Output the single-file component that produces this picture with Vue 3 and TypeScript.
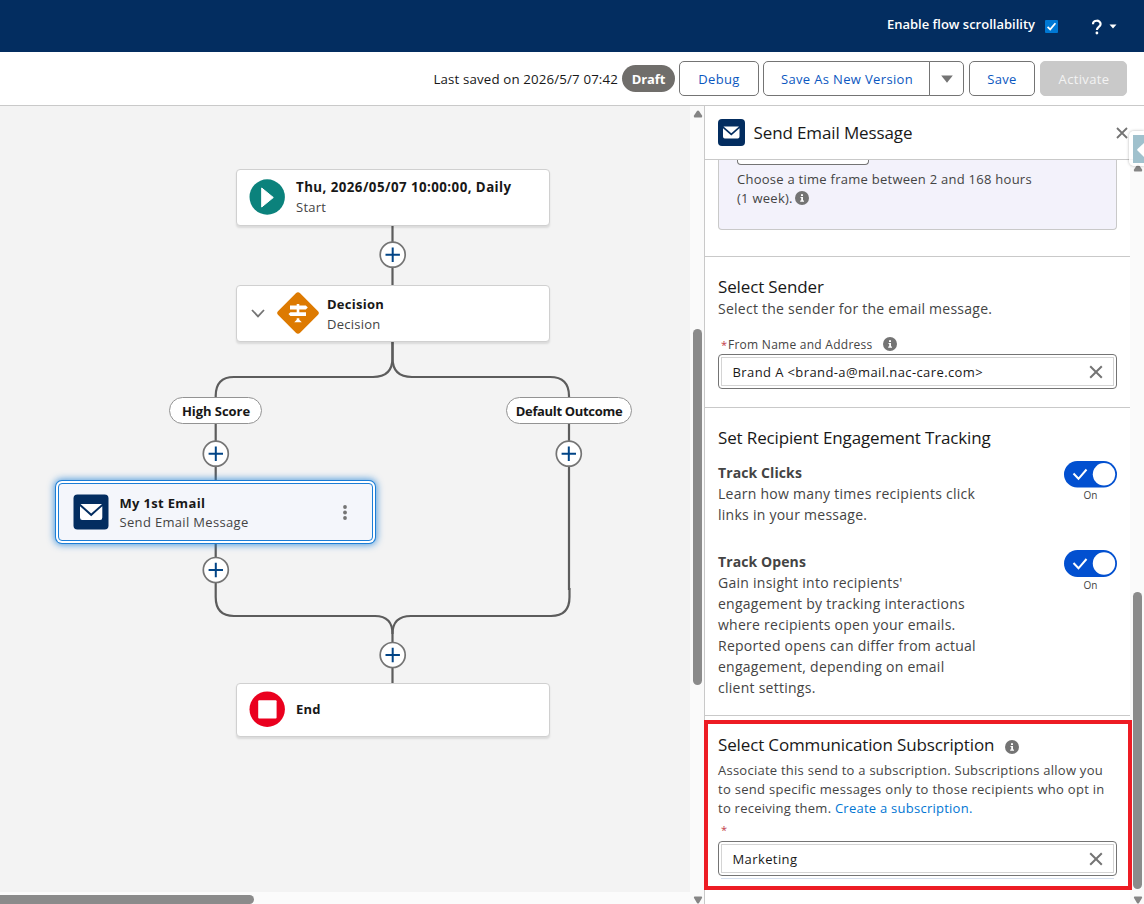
<script setup lang="ts">
interface Point {
  x: number
  y: number
}

const addButtons: Point[] = [
  { x: 392.7, y: 254.7 },
  { x: 215.8, y: 453.7 },
  { x: 568.8, y: 453.7 },
  { x: 215.8, y: 570 },
  { x: 392.7, y: 655 },
]

const connectors: string[] = [
  'M392.5 226V285',
  'M392.5 342V358Q392.5 377 373 377H234Q215.700 377 215.700 396V483',
  'M392.500 342V358Q392.500 377 412 377H550Q569 377 569 396V590',
  'M215.700 543V597Q215.700 616 234 616H375Q392.500 616 392.500 634V683',
  'M569.500 588V597Q569.500 616 551 616H411Q392.500 616 392.500 634',
]

const clicksText: string[] = ['Learn how many times recipients click', 'links in your message.']
const opensText: string[] = [
  "Gain insight into recipients'",
  'engagement by tracking interactions',
  'where recipients open your emails.',
  'Reported opens can differ from actual',
  'engagement, depending on email',
  'client settings.',
]
</script>

<template>
  <div class="app">
    <header class="topbar">
      <span class="scroll-label">Enable flow scrollability</span>
      <svg class="checkbox" width="13" height="13" viewBox="0 0 13 13">
        <rect width="13" height="13" rx="1" fill="#0078d4" />
        <path d="M2.600 6.800L5.200 9.400L10.400 3.200" fill="none" stroke="#fff" stroke-width="1.700" />
      </svg>
      <svg class="help" width="12" height="16" viewBox="0 0 12 16">
        <path d="M2 5.200C2 .6 9.600 .6 9.600 5C9.600 8 5.900 7.800 5.900 11" fill="none" stroke="#fff" stroke-width="2.200" />
        <circle cx="5.900" cy="14" r="1.400" fill="#fff" />
      </svg>
      <svg class="help-caret" width="8" height="5" viewBox="0 0 8 5"><path d="M.5 .5H7.500L4 4.500Z" fill="#fff" /></svg>
    </header>

    <div class="toolbar">
      <span class="saved">Last saved on 2026/5/7 07:42</span>
      <span class="draft">Draft</span>
      <button class="btn debug"><span>Debug</span></button>
      <div class="group">
        <button class="btn save-as"><span>Save As New Version</span></button>
        <button class="btn more">
          <svg width="12" height="8" viewBox="0 0 12 8"><path d="M.2 .5H11.800L6 7.800Z" fill="#747474" /></svg>
        </button>
      </div>
      <button class="btn save"><span>Save</span></button>
      <button class="btn activate"><span>Activate</span></button>
    </div>

    <main class="main">
      <section class="canvas">
        <svg class="lines" width="690" height="904" viewBox="0 0 690 904">
          <path v-for="d in connectors" :key="d" :d="d" fill="none" stroke="#5c5c5c" stroke-width="2.200" />
        </svg>

        <div class="node start">
          <svg width="36" height="36" viewBox="0 0 36 36">
            <circle cx="18.200" cy="18" r="17.700" fill="#0b827c" />
            <path d="M12.700 9L24.300 18.500L12.700 28Z" fill="#fff" stroke="#fff" stroke-linejoin="round" />
          </svg>
          <div class="node-text">
            <strong class="start-title">Thu, 2026/05/07 10:00:00, Daily</strong>
            <span>Start</span>
          </div>
        </div>

        <div class="node decision">
          <svg class="chev" width="14" height="9" viewBox="0 0 14 9">
            <path d="M1 1L7 7.400L13 1" fill="none" stroke="#747474" stroke-width="1.800" />
          </svg>
          <svg class="diamond" width="42" height="42" viewBox="0 0 42 42">
            <rect x="5.500" y="5.500" width="31" height="31" rx="3" transform="rotate(45 21 21)" fill="#dd7a01" />
            <path
              d="M13 13.500H19.700V12H22.300V13.500H28.800L30.800 15.500L28.800 17.500H13ZM19.700 17H22.300V20.200H19.700ZM13.400 20.200H29V24H13.400L11.500 22.100ZM19.700 26.300H22.300V27.800L24.800 30.200H17.200L19.700 27.800Z"
              fill="#fff"
            />
          </svg>
          <div class="node-text">
            <strong class="decision-title">Decision</strong>
            <span class="decision-sub">Decision</span>
          </div>
        </div>

        <div class="outcome high"><span>High Score</span></div>
        <div class="outcome default"><span>Default Outcome</span></div>

        <div class="node email">
          <svg width="36" height="36" viewBox="0 0 36 36">
            <rect width="35" height="35" x=".5" y=".5" rx="4" fill="#032d60" />
            <path d="M7.500 10H29L18.200 19.500Z" fill="#fff" />
            <path d="M7 12.200L18.200 22.200L29.300 12.200V23.500Q29.300 26 27 26H9.300Q7 26 7 23.500Z" fill="#fff" />
          </svg>
          <div class="node-text">
            <strong class="email-title">My 1st Email</strong>
            <span class="email-sub">Send Email Message</span>
          </div>
          <svg class="dots" width="4" height="15" viewBox="0 0 4 15">
            <circle cx="2" cy="2" r="1.900" fill="#747474" />
            <circle cx="2" cy="7.500" r="1.900" fill="#747474" />
            <circle cx="2" cy="13" r="1.900" fill="#747474" />
          </svg>
        </div>

        <div class="node end">
          <svg width="36" height="36" viewBox="0 0 36 36">
            <circle cx="18.200" cy="18.200" r="17.700" fill="#ea001e" />
            <rect x="9.200" y="9.200" width="18.400" height="18.400" rx="1" fill="#fff" />
          </svg>
          <div class="node-text"><strong class="end-title">End</strong></div>
        </div>

        <svg class="lines" width="690" height="904" viewBox="0 0 690 904">
          <g v-for="p in addButtons" :key="`${p.x}-${p.y}`" :transform="`translate(${p.x} ${p.y})`">
            <circle r="12.500" fill="#fff" stroke="#747474" stroke-width="1.700" />
            <path d="M-7.200 0H7.200M0 -7.200V7.200" stroke="#014486" stroke-width="2" />
          </g>
        </svg>

        <div class="hscroll"></div>
      </section>

      <div class="vscroll">
        <svg class="arrow" width="10" height="8" viewBox="0 0 10 8"><path d="M4 1Q5 0 6 1L9 5.500Q9.500 7.500 8.500 7.500H1.500Q.5 7.500 1 5.500Z" fill="#858585" /></svg>
        <div class="thumb"></div>
        <svg class="arrow down" width="10" height="8" viewBox="0 0 10 8"><path d="M4 7Q5 8 6 7L9 2Q9.500 .5 8.500 .5H1.500Q.5 .5 1 2Z" fill="#858585" /></svg>
      </div>

      <aside class="panel">
        <div class="panel-head">
          <svg width="27" height="27" viewBox="0 0 27 27">
            <rect width="27" height="27" rx="4" fill="#032d60" />
            <path d="M5.500 7.500H21L13.300 14.300Z" fill="#fff" />
            <path d="M5 9.200L13.300 16.500L21.500 9.200V17.500Q21.500 19.500 19.700 19.500H6.800Q5 19.500 5 17.500Z" fill="#fff" />
          </svg>
          <h2 class="panel-title">Send Email Message</h2>
          <svg class="close" width="12" height="12" viewBox="0 0 12 12"><path d="M1 1L11 11M11 1L1 11" stroke="#747474" stroke-width="1.800" /></svg>
        </div>

        <div class="panel-row">
          <div class="panel-body">
            <div class="frame-box">
              <div class="cut-input"></div>
              <p class="frame-text">
                <span class="f1">Choose a time frame between 2 and 168 hours</span>
                <span class="frame-last">
                  <span class="f2">(1 week).</span>
                  <svg class="info" width="14" height="14" viewBox="0 0 14 14"><circle cx="7" cy="7" r="7" fill="#747474" /><path d="M6 3.200H8V5H6ZM5.500 6H8V9.600H9V10.800H5.200V9.600H6.200V7.100H5.500Z" fill="#fff" /></svg>
                </span>
              </p>
            </div>

            <section class="block sender">
              <h3 class="sender-title">Select Sender</h3>
              <p class="sender-sub">Select the sender for the email message.</p>
              <div class="label-row">
                <i>*</i><span class="from">From Name and Address</span>
                <svg class="info" width="14" height="14" viewBox="0 0 14 14"><circle cx="7" cy="7" r="7" fill="#747474" /><path d="M6 3.200H8V5H6ZM5.500 6H8V9.600H9V10.800H5.200V9.600H6.200V7.100H5.500Z" fill="#fff" /></svg>
              </div>
              <div class="field">
                <div class="field-inner">
                  <span class="brand">Brand A &lt;brand-a@mail.nac-care.com&gt;</span>
                  <svg width="14" height="14" viewBox="0 0 14 14"><path d="M1.200 1.200L12.800 12.800M12.800 1.200L1.200 12.800" stroke="#747474" stroke-width="2" /></svg>
                </div>
              </div>
            </section>

            <section class="block tracking">
              <h3 class="tracking-title">Set Recipient Engagement Tracking</h3>
              <div class="track">
                <div class="track-text">
                  <strong class="clicks-title">Track Clicks</strong>
                  <span v-for="line in clicksText" :key="line">{{ line }}</span>
                </div>
                <div class="toggle">
                  <svg width="53" height="27" viewBox="0 0 53 27"><rect width="53" height="26.500" rx="13.250" fill="#0250d0" /><circle cx="40" cy="13.300" r="11.200" fill="#fff" /><path d="M9.500 12.500L14.500 17.800L22.500 8.500" fill="none" stroke="#fff" stroke-width="2" /></svg>
                  <span class="on-first">On</span>
                </div>
              </div>
              <div class="track opens">
                <div class="track-text">
                  <strong class="opens-title">Track Opens</strong>
                  <span v-for="line in opensText" :key="line">{{ line }}</span>
                </div>
                <div class="toggle">
                  <svg width="53" height="27" viewBox="0 0 53 27"><rect width="53" height="27" rx="13.500" fill="#0250d0" /><circle cx="40" cy="13.500" r="11.200" fill="#fff" /><path d="M9.500 13L14.500 18.300L22.500 9" fill="none" stroke="#fff" stroke-width="2" /></svg>
                  <span>On</span>
                </div>
              </div>
            </section>

            <section class="block subscription">
              <div class="sub-head">
                <h3 class="sub-title">Select Communication Subscription</h3>
                <svg class="info" width="14" height="14" viewBox="0 0 14 14"><circle cx="7" cy="7" r="7" fill="#747474" /><path d="M6 3.200H8V5H6ZM5.500 6H8V9.600H9V10.800H5.200V9.600H6.200V7.100H5.500Z" fill="#fff" /></svg>
              </div>
              <p class="sub-text">
                <span>Associate this send to a subscription. Subscriptions allow you</span>
                <span class="second">to send specific messages only to those recipients who opt in</span>
                <span>to receiving them. <a>Create a subscription.</a></span>
              </p>
              <div class="label-row"><i>*</i></div>
              <div class="field">
                <div class="field-inner">
                  <span class="marketing">Marketing</span>
                  <svg width="14" height="14" viewBox="0 0 14 14"><path d="M1.200 1.200L12.800 12.800M12.800 1.200L1.200 12.800" stroke="#747474" stroke-width="2" /></svg>
                </div>
              </div>
              <div class="underline"></div>
            </section>
          </div>

          <div class="vscroll inner">
            <svg class="arrow" width="10" height="8" viewBox="0 0 10 8"><path d="M4 1Q5 0 6 1L9 5.500Q9.500 7.500 8.500 7.500H1.500Q.5 7.500 1 5.500Z" fill="#858585" /></svg>
            <div class="thumb"></div>
            <svg class="arrow down" width="10" height="8" viewBox="0 0 10 8"><path d="M4 7Q5 8 6 7L9 2Q9.500 .5 8.500 .5H1.500Q.5 .5 1 2Z" fill="#858585" /></svg>
          </div>
        </div>

        <div class="side-tab">
          <svg width="11" height="28" viewBox="0 0 11 28"><rect width="11" height="28" fill="#a0c1cd" /><path d="M11 8V22L4.500 15.500Q3.800 14.700 4.500 14Z" fill="#fff" /></svg>
        </div>
        <div class="highlight"></div>
      </aside>
    </main>
  </div>
</template>

<style>
body {
  margin: 0;
}
</style>

<style scoped>
.app {
  width: 1144px;
  height: 904px;
  overflow: hidden;
  position: relative;
  display: flex;
  flex-direction: column;
  background: #fff;
  font-family: 'Open Sans', 'Noto Sans', sans-serif;
  font-size: 13px;
  color: #181818;
  white-space: nowrap;
}
h2,
h3,
p {
  margin: 0;
  font-weight: 400;
}
svg {
  display: block;
  flex: none;
}
.topbar {
  height: 52px;
  flex: none;
  box-sizing: border-box;
  padding-right: 27px;
  background: #032d60;
  display: flex;
  align-items: center;
  justify-content: flex-end;
}
.scroll-label {
  color: #fff;
  font-weight: 600;
  font-size: 13px;
  margin: -4px 10px 0 0;
}
.help {
  margin: 2px 6px 0 33px;
}
.toolbar {
  height: 54px;
  flex: none;
  box-sizing: border-box;
  border-bottom: 1px solid #c9c9c9;
  padding-right: 17px;
  display: flex;
  align-items: center;
  justify-content: flex-end;
}
.saved {
  font-size: 13.300px;
  letter-spacing: 0.14px;
  margin-right: 4px;
}
.draft {
  width: 53px;
  height: 27px;
  line-height: 28px;
  border-radius: 14px;
  background: #706e6b;
  color: #fff;
  font-weight: 700;
  text-align: center;
  letter-spacing: -0.1px;
  margin-right: 4px;
}
.btn {
  box-sizing: border-box;
  height: 35px;
  padding: 0;
  border: 1px solid #747474;
  border-radius: 5px;
  background: #fff;
  color: #0b57c0;
  font: 13px 'Open Sans', 'Noto Sans', sans-serif;
  letter-spacing: 0.35px;
  display: flex;
  align-items: center;
  justify-content: center;
}
.debug {
  width: 80px;
  margin-right: 4px;
}
.group {
  display: flex;
  margin-right: 5px;
}
.save-as {
  width: 167px;
  padding-left: 1px;
  border-radius: 5px 0 0 5px;
}
.more {
  width: 35px;
  margin-left: -1px;
  border-radius: 0 5px 5px 0;
}
.save {
  width: 66px;
  margin-right: 5px;
}
.activate {
  width: 87px;
  padding-left: 1px;
  background: #c9c9c9;
  border-color: #c9c9c9;
  color: #f3f3f3;
}
.main {
  flex: 1;
  min-height: 0;
  display: flex;
}
/* The flow canvas is a free surface: nodes sit at their own coordinates. */
.canvas {
  width: 690px;
  flex: none;
  position: relative;
  overflow: hidden;
  background: #f3f3f3;
}
.lines {
  position: absolute;
  left: 0;
  top: -106px;
}
.node {
  position: absolute;
  box-sizing: border-box;
  width: 314px;
  height: 57px;
  border: 1px solid #d0d0d0;
  border-radius: 4px;
  background: #fff;
  box-shadow: 0 2px 2px rgba(0, 0, 0, 0.1);
  display: flex;
  align-items: center;
}
.node-text {
  display: flex;
  flex-direction: column;
  line-height: 20px;
  margin-left: 11px;
  color: #444;
  letter-spacing: 0.25px;
}
.node-text strong {
  color: #181818;
}
.start {
  left: 236px;
  top: 63px;
  padding: 0 0 2px 12px;
}
.node-text .start-title {
  font-size: 13.300px;
  letter-spacing: 0.45px;
}
.decision {
  left: 236px;
  top: 179px;
  padding-left: 14px;
}
.decision .chev {
  margin-right: 12px;
}
.decision .diamond {
  margin-bottom: 2px;
}
.decision .node-text {
  margin-left: 8px;
}
.end {
  left: 236px;
  top: 577px;
  height: 54px;
  padding: 0 0 2px 12px;
}
.email {
  left: 58px;
  top: 377px;
  width: 315px;
  height: 58px;
  padding-left: 14px;
  background: #f4f6fb;
  border: 1px solid #1b7dd6;
  box-shadow: 0 0 0 2px #fff, 0 0 0 3px #1b7dd6, 0 0 7px 4px rgba(27, 125, 214, 0.75);
}
.email .node-text {
  margin: 2px 0 0 10.500px;
  line-height: 19px;
  letter-spacing: 0.33px;
}
.dots {
  margin-left: auto;
  margin-right: 25px;
}
.outcome {
  position: absolute;
  box-sizing: border-box;
  height: 27px;
  border: 1px solid #939393;
  border-radius: 14px;
  background: #fff;
  font-weight: 700;
  display: flex;
  align-items: center;
  justify-content: center;
}
.high {
  left: 169px;
  top: 291px;
  width: 93px;
  padding-left: 1px;
  letter-spacing: -0.05px;
}
.default {
  left: 506px;
  top: 291px;
  width: 126px;
  letter-spacing: -0.33px;
}
.hscroll {
  position: absolute;
  left: 0;
  bottom: 0;
  width: 690px;
  height: 12px;
  background: #fbfbfb;
}
.hscroll::before {
  content: '';
  display: block;
  width: 254px;
  height: 9px;
  border-radius: 0 5px 5px 0;
  background: #8b8b8b;
  margin-top: 3px;
}
.vscroll {
  width: 14px;
  flex: none;
  background: #fafafa;
  display: flex;
  flex-direction: column;
  align-items: center;
  box-sizing: border-box;
  padding: 4px 0 0 1px;
}
.vscroll .thumb {
  width: 9px;
  height: 356px;
  margin-top: 211px;
  border-radius: 5px;
  background: #8b8b8b;
}
.vscroll .down {
  margin-top: auto;
}
.panel {
  flex: 1;
  position: relative;
  box-sizing: border-box;
  border-left: 1px solid #c9c9c9;
  display: flex;
  flex-direction: column;
}
.panel-head {
  height: 54px;
  flex: none;
  box-sizing: border-box;
  border-bottom: 1px solid #c9c9c9;
  padding: 0 16px 0 13px;
  display: flex;
  align-items: center;
}
.panel-title {
  font-size: 17px;
  margin: -1px 0 0 8.500px;
  letter-spacing: -0.12px;
}
.close {
  margin-left: auto;
}
.panel-row {
  flex: 1;
  min-height: 0;
  display: flex;
}
.panel-body {
  width: 425px;
  overflow: hidden;
}
.frame-box {
  box-sizing: border-box;
  width: 399px;
  height: 70px;
  margin-left: 13px;
  padding-left: 18px;
  border: 1px solid #c9c9c9;
  border-top: 0;
  border-radius: 0 0 4px 4px;
  background: #f3f2fb;
}
.cut-input {
  box-sizing: border-box;
  width: 132px;
  height: 5px;
  border: 1px solid #747474;
  border-top: 0;
  border-radius: 0 0 4px 4px;
  background: #fff;
}
.frame-text {
  margin-top: 5px;
  line-height: 19px;
  letter-spacing: 0.26px;
  color: #444;
  display: flex;
  flex-direction: column;
}
.frame-last {
  display: flex;
  align-items: center;
  gap: 2px;
}
.frame-last .info {
  margin-bottom: 1px;
}
.block {
  box-sizing: border-box;
  border-top: 1px solid #c9c9c9;
  padding: 0 13px;
  color: #444;
}
.block h3 {
  font-size: 17px;
  line-height: 24px;
  letter-spacing: -0.14px;
  color: #181818;
}
.sender {
  margin-top: 26px;
  height: 151px;
  padding-top: 18px;
}
.sender-sub {
  margin-top: -1px;
  font-size: 14px;
  line-height: 21px;
  letter-spacing: 0.25px;
}
.label-row {
  height: 18px;
  margin-top: 16px;
  padding-left: 3px;
  display: flex;
  align-items: center;
  font-size: 12px;
  letter-spacing: 0.26px;
}
.label-row i {
  font-style: normal;
  font-size: 11px;
  color: #c23a48;
  width: 7px;
}
.label-row .info {
  margin-left: 10px;
}
.field {
  box-sizing: border-box;
  height: 35px;
  margin-top: 1px;
  border: 1px solid #747474;
  border-radius: 4px;
  padding: 2px;
}
.field-inner {
  box-sizing: border-box;
  height: 29px;
  border: 1px solid #d4d4d4;
  padding: 0 10px 0 10.500px;
  color: #181818;
  letter-spacing: 0.4px;
  display: flex;
  align-items: center;
  justify-content: space-between;
}
.tracking {
  height: 308px;
  padding-top: 18px;
}
.track {
  display: flex;
  justify-content: space-between;
  margin-top: 12px;
}
.opens {
  margin-top: 26px;
}
.track-text {
  display: flex;
  flex-direction: column;
  font-size: 14px;
  line-height: 21px;
  letter-spacing: 0.26px;
}
.track-text strong {
  letter-spacing: 0.1px;
}
.toggle {
  display: flex;
  flex-direction: column;
  align-items: center;
  margin-top: -1px;
  font-size: 10px;
  line-height: 16px;
}
.on-first {
  margin-top: -1px;
}
.subscription {
  padding-top: 17px;
}
.sub-head {
  display: flex;
  align-items: center;
}
.sub-head .info {
  margin: 3px 0 0 11px;
}
.sub-text {
  margin-top: 4px;
  line-height: 19px;
  letter-spacing: 0.25px;
  display: flex;
  flex-direction: column;
}
.sub-text .second {
  letter-spacing: 0.29px;
}
.sub-text a {
  color: #0176d3;
}
.subscription .label-row {
  margin-top: 2px;
}
.subscription .field {
  margin-top: 3px;
}
.underline {
  margin: 2px 3px 0;
  height: 1px;
  background: #d5dfee;
}
.inner {
  width: 14px;
}
.inner .thumb {
  height: 297px;
  margin-top: 420px;
}
.side-tab {
  position: absolute;
  right: 0;
  top: 25px;
  width: 15px;
  height: 35px;
  box-sizing: border-box;
  padding: 4px 0 0 4px;
  border-radius: 5px 0 0 5px;
  background: rgba(255, 255, 255, 0.8);
  box-shadow: 0 0 3px rgba(0, 0, 0, 0.3);
}
.highlight {
  position: absolute;
  box-sizing: border-box;
  left: -1px;
  top: 614px;
  width: 428px;
  height: 170px;
  border: 4px solid #ed1c24;
}
</style>
